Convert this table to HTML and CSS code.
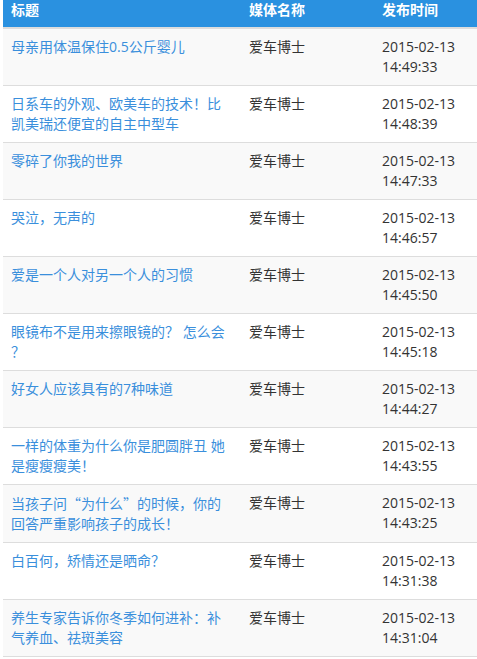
FILE: index.html
```html
<!DOCTYPE html>
<html>
<head>
<meta charset="utf-8">
<link rel="stylesheet" href="styles.css">
</head>
<body>
<div class="wrap">
<table class="news">
<colgroup><col class="c1"><col class="c2"><col class="c3"></colgroup>
<thead>
<tr><th>标题</th><th>媒体名称</th><th>发布时间</th></tr>
</thead>
<tbody>
<tr><td class="title"><a>母亲用体温保住0.5公斤婴儿</a></td><td>爱车博士</td><td>2015-02-13<br>14:49:33</td></tr>
<tr><td class="title"><a>日系车的外观、欧美车的技术！比凯美瑞还便宜的自主中型车</a></td><td>爱车博士</td><td>2015-02-13<br>14:48:39</td></tr>
<tr><td class="title"><a>零碎了你我的世界</a></td><td>爱车博士</td><td>2015-02-13<br>14:47:33</td></tr>
<tr><td class="title"><a>哭泣，无声的</a></td><td>爱车博士</td><td>2015-02-13<br>14:46:57</td></tr>
<tr><td class="title"><a>爱是一个人对另一个人的习惯</a></td><td>爱车博士</td><td>2015-02-13<br>14:45:50</td></tr>
<tr><td class="title"><a>眼镜布不是用来擦眼镜的？ 怎么会？</a></td><td>爱车博士</td><td>2015-02-13<br>14:45:18</td></tr>
<tr><td class="title"><a>好女人应该具有的7种味道</a></td><td>爱车博士</td><td>2015-02-13<br>14:44:27</td></tr>
<tr><td class="title"><a>一样的体重为什么你是肥圆胖丑 她是瘦瘦瘦美！</a></td><td>爱车博士</td><td>2015-02-13<br>14:43:55</td></tr>
<tr><td class="title"><a>当孩子问<span class="cjk">“</span>为什么<span class="cjk">”</span>的时候，你的回答严重影响孩子的成长！</a></td><td>爱车博士</td><td>2015-02-13<br>14:43:25</td></tr>
<tr><td class="title"><a>白百何，矫情还是晒命？</a></td><td>爱车博士</td><td>2015-02-13<br>14:31:38</td></tr>
<tr><td class="title"><a>养生专家告诉你冬季如何进补：补气养血、祛斑美容</a></td><td>爱车博士</td><td>2015-02-13<br>14:31:04</td></tr>
</tbody>
</table>
</div>
</body>
</html>
```
FILE: styles.css
```css
html, body {
  margin: 0;
  padding: 0;
  background: #fff;
}
.wrap {
  padding-left: 3px;
}
.news {
  width: 474px;
  border-collapse: collapse;
  table-layout: fixed;
  font-family: "Open Sans", "Noto Sans CJK SC", sans-serif;
  font-size: 14px;
  line-height: 20px;
  color: #333;
}
.c1 { width: 238px; }
.c2 { width: 133px; }
.c3 { width: 103px; }
.news th {
  background: #2a91e0;
  color: #fff;
  font-weight: bold;
  text-align: left;
  padding: 0 8px 7px;
  border-bottom: 2px solid #ddd;
}
.news td {
  padding: 8px;
  vertical-align: top;
  border-bottom: 1px solid #ddd;
}
.news td.title {
  line-break: anywhere;
}
.news tbody tr:nth-child(odd) td {
  background: #f9f9f9;
}
.news a {
  color: #3a8fdc;
  text-decoration: none;
}
.cjk {
  font-family: "Noto Sans CJK SC", sans-serif;
}
```
